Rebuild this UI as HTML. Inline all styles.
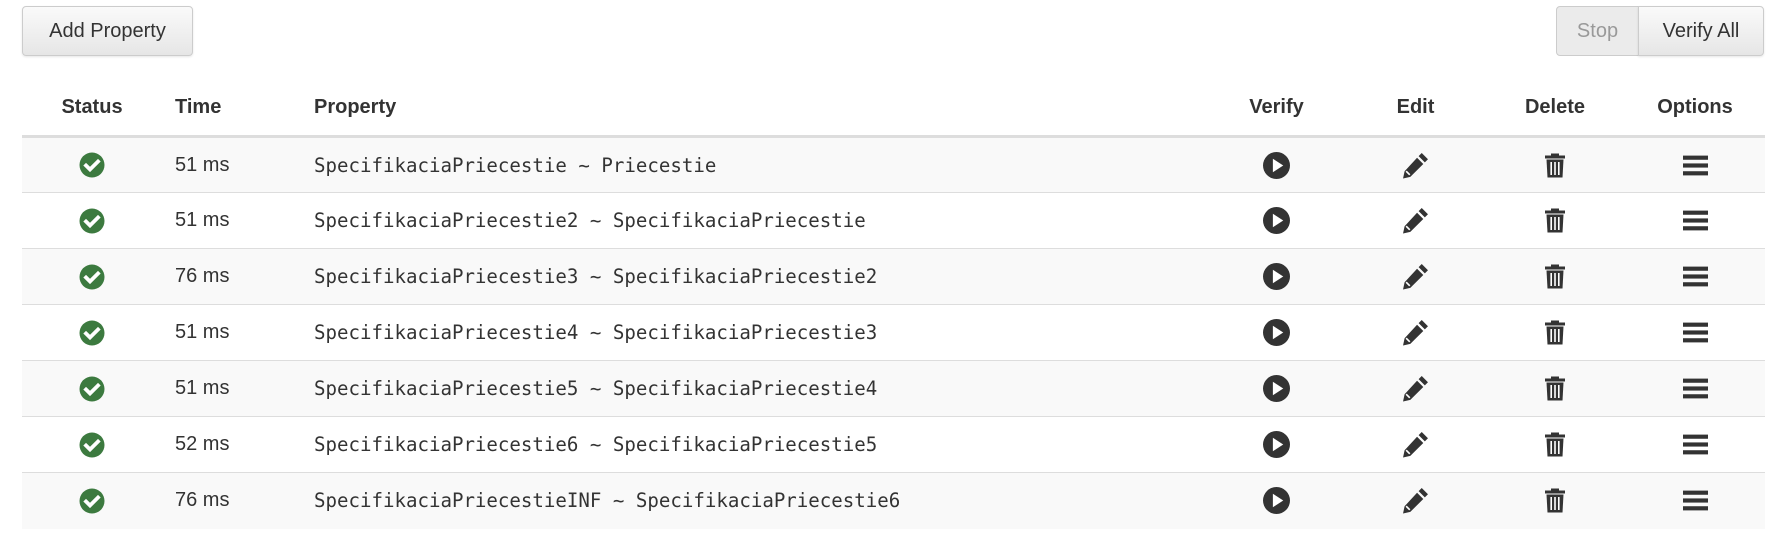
<!DOCTYPE html>
<html><head><style>
body{margin:0;width:1767px;height:544px;background:#fff;font-family:"Liberation Sans",sans-serif;color:#333;overflow:hidden;position:relative}
.btn{position:absolute;top:6px;height:50px;box-sizing:border-box;border:1px solid #ccc;background:linear-gradient(#fafafa,#e6e6e6);font-size:20px;line-height:48px;text-align:center;color:#333;box-shadow:0 1px 2px rgba(0,0,0,.1)}
table{position:absolute;left:22px;top:80px;width:1743px;border-collapse:collapse;table-layout:fixed}
th{font-size:20px;font-weight:bold;height:55px;border-bottom:3px solid #ddd;text-align:center;padding:0}
td{height:56px;padding:0;border-top:1px solid #ddd;text-align:center;font-size:20px;box-sizing:border-box}
tr.o td{background:#f9f9f9}
td.t,th.t{text-align:left;padding-left:13px}
td.p,th.p{text-align:left;padding-left:12px}
td.p{font-family:"DejaVu Sans Mono","Liberation Mono",monospace;font-size:19.1px}
svg{display:block;margin:auto}
</style></head><body>
<div class="btn" style="left:22px;width:171px;border-radius:4px">Add Property</div>
<div class="btn" style="left:1556px;width:83px;border-radius:4px 0 0 4px;color:#999;background:#ebebeb;box-shadow:none">Stop</div>
<div class="btn" style="left:1638px;width:126px;border-radius:0 4px 4px 0">Verify All</div>
<table>
<colgroup><col style="width:140px"><col style="width:140px"><col style="width:905px"><col style="width:139px"><col style="width:139px"><col style="width:140px"><col style="width:140px"></colgroup>
<tr><th>Status</th><th class="t">Time</th><th class="p">Property</th><th>Verify</th><th>Edit</th><th>Delete</th><th>Options</th></tr>
</table>
<script>
const rows=[["51 ms","SpecifikaciaPriecestie ~ Priecestie"],["51 ms","SpecifikaciaPriecestie2 ~ SpecifikaciaPriecestie"],["76 ms","SpecifikaciaPriecestie3 ~ SpecifikaciaPriecestie2"],["51 ms","SpecifikaciaPriecestie4 ~ SpecifikaciaPriecestie3"],["51 ms","SpecifikaciaPriecestie5 ~ SpecifikaciaPriecestie4"],["52 ms","SpecifikaciaPriecestie6 ~ SpecifikaciaPriecestie5"],["76 ms","SpecifikaciaPriecestieINF ~ SpecifikaciaPriecestie6"]];
const chk='<svg width="26" height="26" viewBox="0 0 26 26"><circle cx="13" cy="13" r="12.5" fill="#3c7a3f"/><path d="M7 13.5l4 4 8-8" stroke="#fff" stroke-width="3.8" fill="none" stroke-linecap="square"/></svg>';
const play='<svg width="27" height="27" viewBox="0 0 26 26"><circle cx="13" cy="13" r="13" fill="#333"/><path d="M9.5 6.5v13l10-6.5z" fill="#fff"/></svg>';
const pen='<svg width="27" height="27" viewBox="0 0 26 26"><path d="M19 1l6 6-3 3-6-6z M14.5 5.5l6 6-12.5 12.5-7 1.5 1.5-7z" fill="#333"/><path d="M4 18.5l3.5 3.5" stroke="#fff" stroke-width="1.6"/></svg>';
const trash='<svg width="24" height="27" viewBox="0 0 24 26"><path d="M8 1h8v2h6v3H2V3h6z" fill="#333"/><path d="M3.5 7h17l-1 18H4.5z" fill="#333"/><path d="M8.2 9.5v13M12 9.5v13M15.8 9.5v13" stroke="#fff" stroke-width="1.6"/></svg>';
const bars='<svg width="25" height="21" viewBox="0 0 24 20"><rect y="0.5" width="24" height="4" fill="#333"/><rect y="8" width="24" height="4" fill="#333"/><rect y="15.5" width="24" height="4" fill="#333"/></svg>';
const t=document.querySelector('table');
rows.forEach((r,i)=>{const tr=document.createElement('tr');if(i%2==0)tr.className='o';
tr.innerHTML=`<td>${chk}</td><td class="t">${r[0]}</td><td class="p">${r[1]}</td><td>${play}</td><td>${pen}</td><td>${trash}</td><td>${bars}</td>`;t.appendChild(tr);});
</script>
</body></html>
